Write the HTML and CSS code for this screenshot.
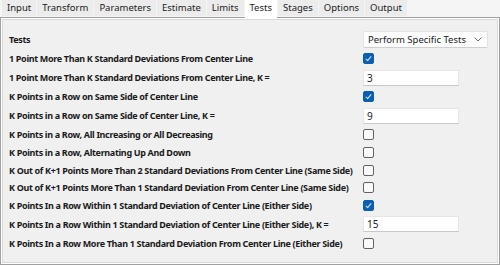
FILE: index.html
```html
<!DOCTYPE html>
<html lang="en">
<head>
  <meta charset="UTF-8">
  <title>Tests</title>
  <link rel="stylesheet" href="styles.css">
</head>
<body>
  <div class="tabs">
    <div class="tab">Input</div>
    <div class="tab">Transform</div>
    <div class="tab">Parameters</div>
    <div class="tab">Estimate</div>
    <div class="tab">Limits</div>
    <div class="tab active">Tests</div>
    <div class="tab">Stages</div>
    <div class="tab">Options</div>
    <div class="tab">Output</div>
  </div>

  <div class="panel">
    <div class="row head">
      <label>Tests</label>
      <div class="select">
        <span>Perform Specific Tests</span>
        <svg width="8" height="5" viewBox="0 0 8 5"><path d="M0.5 0.5 L4 4 L7.5 0.5" fill="none" stroke="#6b6b6b" stroke-width="1"/></svg>
      </div>
    </div>

    <div class="row check">
      <label>1 Point More Than K Standard Deviations From Center Line</label>
      <span class="box on"></span>
    </div>
    <div class="row text">
      <label>1 Point More Than K Standard Deviations From Center Line, K =</label>
      <input type="text" value="3">
    </div>
    <div class="row check">
      <label>K Points in a Row on Same Side of Center Line</label>
      <span class="box on"></span>
    </div>
    <div class="row text">
      <label>K Points in a Row on Same Side of Center Line, K =</label>
      <input type="text" value="9">
    </div>
    <div class="row check">
      <label>K Points in a Row, All Increasing or All Decreasing</label>
      <span class="box"></span>
    </div>
    <div class="row check">
      <label>K Points in a Row, Alternating Up And Down</label>
      <span class="box"></span>
    </div>
    <div class="row check">
      <label>K Out of K+1 Points More Than 2 Standard Deviations From Center Line (Same Side)</label>
      <span class="box"></span>
    </div>
    <div class="row check">
      <label>K Out of K+1 Points More Than 1 Standard Deviation From Center Line (Same Side)</label>
      <span class="box"></span>
    </div>
    <div class="row check">
      <label>K Points In a Row Within 1 Standard Deviation of Center Line (Either Side)</label>
      <span class="box on"></span>
    </div>
    <div class="row text">
      <label>K Points In a Row Within 1 Standard Deviation of Center Line (Either Side), K =</label>
      <input type="text" value="15">
    </div>
    <div class="row check">
      <label>K Points In a Row More Than 1 Standard Deviation From Center Line (Either Side)</label>
      <span class="box"></span>
    </div>
  </div>
</body>
</html>
```

FILE: styles.css
```css
body {
  margin: 0;
  width: 500px;
  height: 265px;
  background-color: #f0f0f0;
  font-family: "Noto Sans", "Open Sans", sans-serif;
  color: #1a1a1a;
  overflow: hidden;
}
.tabs {
  display: flex;
  gap: 1px;
  height: 17px;
  padding-left: 2px;
  background-color: #f5f5f5;
}
.tab {
  padding: 0 5px;
  height: 16px;
  line-height: 16px;
  font-size: 9.5px;
  background-color: #ececec;
  color: #1a1a1a;
}
.tab.active {
  background-color: #ffffff;
  height: 18px;
  position: relative;
  z-index: 1;
}
.panel {
  height: 236px;
  padding: 10px 0 0 8px;
  border: 1px solid #a0a0a0;
  box-shadow: inset 0 0 0 1px #ffffff, inset 0 0 0 2px #dadada;
}
.row {
  display: flex;
  align-items: center;
  height: 17.6px;
}
.row.head {
  height: 22px;
}
.row.text {
  height: 20.5px;
}
.row label {
  width: 354px;
  flex: none;
  font-size: 9px;
  font-weight: bold;
  letter-spacing: -0.33px;
  white-space: nowrap;
}
.select {
  width: 114px;
  height: 15px;
  padding: 0 5px 0 4px;
  display: flex;
  align-items: center;
  justify-content: space-between;
  background-color: #fdfdfd;
  border: 1px solid #e3e3e3;
  border-bottom-color: #cfcfcf;
  border-radius: 2px;
  font-size: 9.5px;
}
.box {
  width: 9px;
  height: 9px;
  border: 1px solid #626262;
  border-radius: 2px;
  background-color: #f9f9f9;
  position: relative;
}
.box.on {
  background-color: #0a5fb4;
  border-color: #0a5fb4;
}
.box.on::after {
  content: "";
  position: absolute;
  left: 3px;
  top: 1px;
  width: 2px;
  height: 5px;
  border: solid #dbe8f5;
  border-width: 0 1px 1px 0;
  transform: rotate(40deg);
}
input[type="text"] {
  width: 88px;
  height: 14px;
  margin: 0;
  padding: 0 3px;
  border: 1px solid #e6e6e6;
  border-bottom-color: #c8c8c8;
  background-color: #ffffff;
  font-family: inherit;
  font-size: 10px;
  color: #222222;
}
```
